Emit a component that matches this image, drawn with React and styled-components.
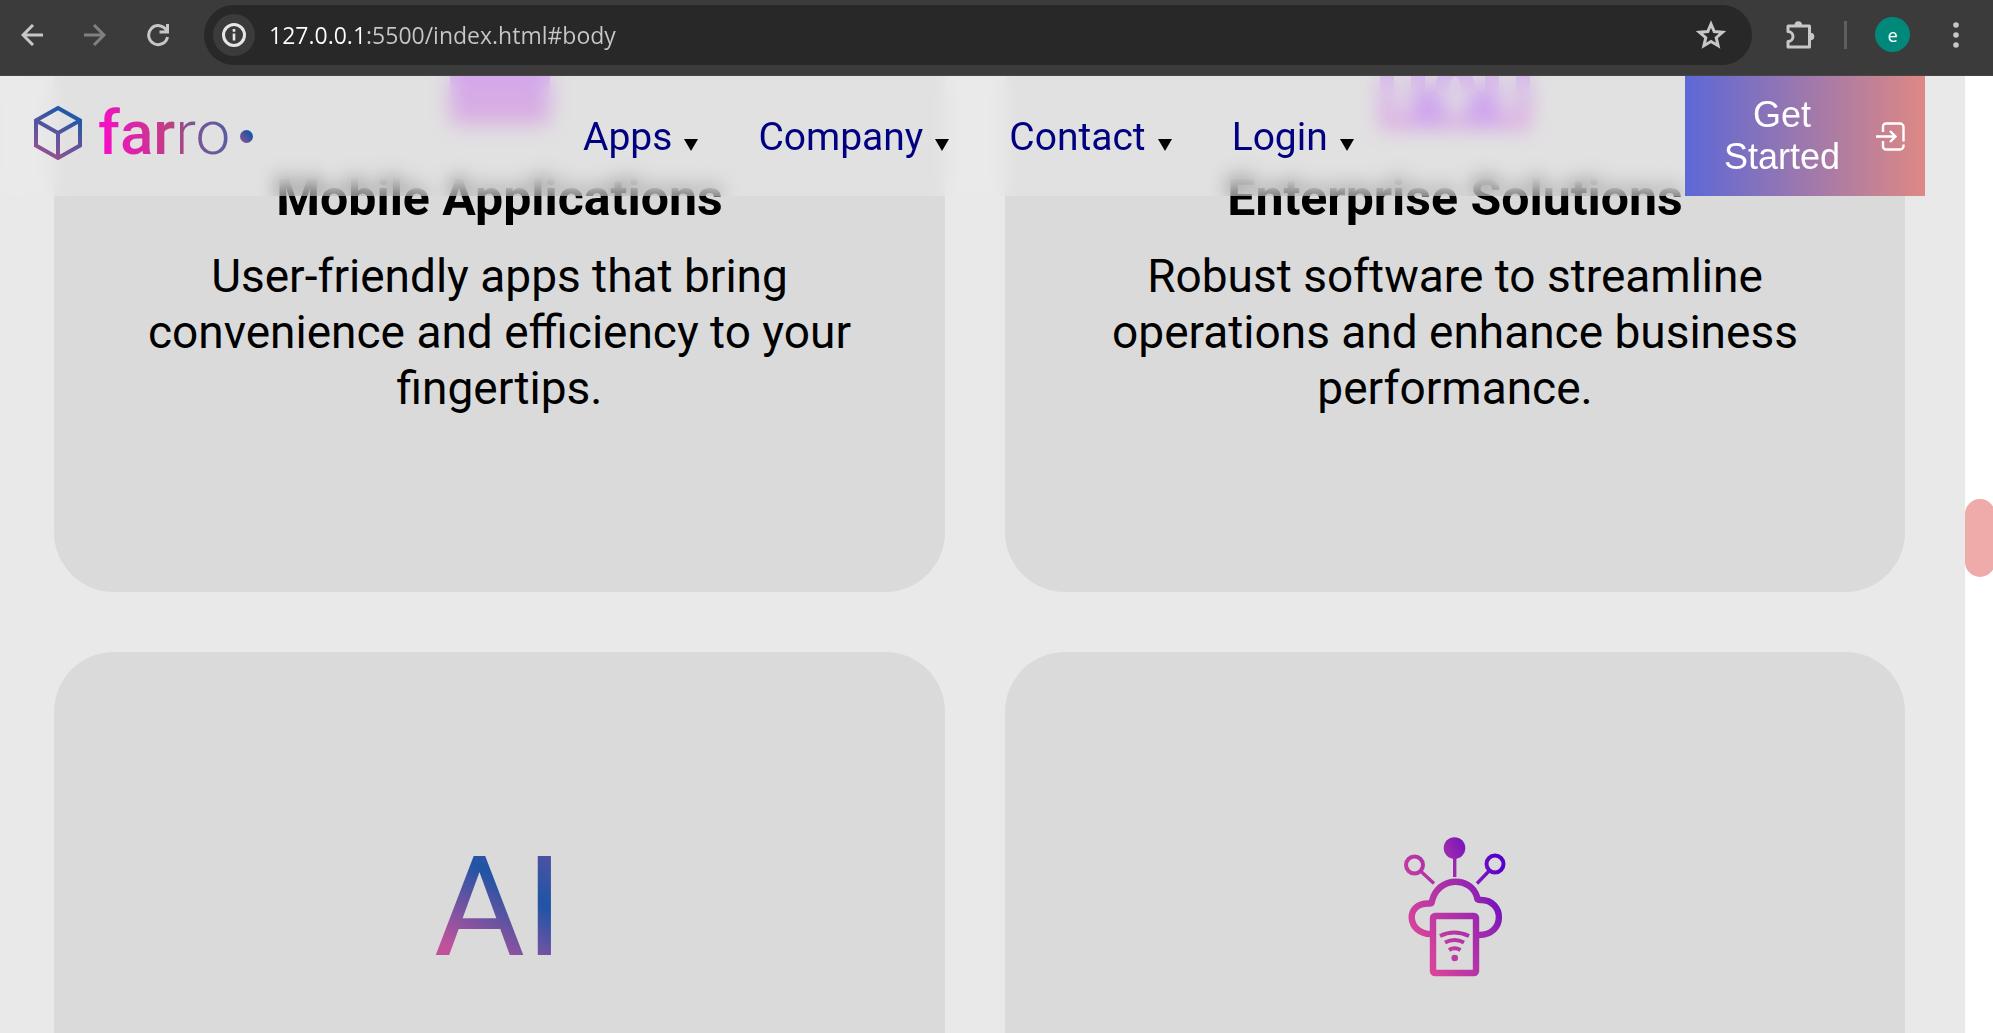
import React from "react";
import styled, { createGlobalStyle } from "styled-components";

const GlobalStyle = createGlobalStyle`
  *, *::before, *::after { box-sizing: border-box; }
  body { margin: 0; font-family: Roboto, "Liberation Sans", sans-serif; background: #fff; }
  h2, p { margin: 0; padding: 0; }
  button { border: 0; padding: 0; background: none; font: inherit; color: inherit; cursor: pointer; }
`;

const Window = styled.div`
  display: flex;
  flex-direction: column;
  height: 100vh;
  overflow: hidden;
`;

/* Browser toolbar */

const Toolbar = styled.div`
  display: flex;
  align-items: center;
  flex: none;
  height: 76px;
  padding: 0 13px 6px 8px;
  background: #3b3b3b;
  border-bottom: 1px solid #484446;
`;

const ToolGroup = styled.div`
  display: flex;
  align-items: center;
  gap: 15px;
`;

const ToolButton = styled.button`
  display: flex;
  align-items: center;
  justify-content: center;
  width: 48px;
  height: 48px;
  color: ${(p) => (p.$dim ? "#808080" : "#c7c7c7")};
`;

const AddressBar = styled.div`
  display: flex;
  align-items: center;
  flex: 1;
  height: 60px;
  margin: 0 24px 0 22px;
  padding: 0 17px 0 9px;
  border-radius: 30px;
  background: #282828;
`;

const SiteInfo = styled.button`
  display: flex;
  align-items: center;
  justify-content: center;
  width: 42px;
  height: 42px;
  border-radius: 50%;
  background: #3b3b3b;
  color: #e6e6e6;
`;

const AddressInput = styled.input`
  flex: 1;
  min-width: 0;
  height: 40px;
  margin-left: 14px;
  padding: 0;
  border: 0;
  outline: 0;
  font: 23px "Open Sans", "Noto Sans", sans-serif;
  color: transparent;
  background: linear-gradient(90deg, #fff 94px, #c7c7c7 94px);
  background-clip: text;
`;

const Separator = styled.span`
  width: 3px;
  height: 28px;
  margin: 0 28px 0 20px;
  background: #5f5f5f;
`;

const Avatar = styled.button`
  width: 35px;
  height: 35px;
  margin-right: 22px;
  border-radius: 50%;
  background: #00897b;
  color: #fff;
  font: 18px "Open Sans", sans-serif;
`;

/* Page */

const Viewport = styled.div`
  display: flex;
  flex: 1;
  min-height: 0;
`;

const Page = styled.main`
  position: relative;
  flex: 1;
  min-width: 0;
  overflow: hidden;
  background: #e9e9e9;
`;

const Header = styled.header`
  position: absolute;
  z-index: 1;
  top: 0;
  left: 0;
  right: 40px;
  display: flex;
  justify-content: space-between;
  height: 120px;
  padding-left: 33px;
  background: rgba(235, 235, 235, 0.4);
  backdrop-filter: blur(10px);
`;

const Logo = styled.a`
  display: flex;
  align-items: center;
  width: 550px;
  padding-bottom: 6px;
  text-decoration: none;
`;

const LogoText = styled.span`
  margin: 0 10px 0 15px;
  font-size: 62px;
  line-height: 76px;
  font-weight: 300;
  color: transparent;
  background: linear-gradient(75deg, #fb08d0 4%, #c04080 55%, #7a5595 70%, #4a60a8 100%);
  background-clip: text;

  b { font-weight: 500; }
`;

const LogoDot = styled.span`
  width: 13px;
  height: 13px;
  margin-top: 6px;
  border-radius: 50%;
  background: linear-gradient(45deg, #9a5090, #2355a5 70%);
`;

const Nav = styled.nav`
  display: flex;
  align-items: center;
  flex: 1;
  gap: 60px;
  padding-top: 2px;
`;

const NavLink = styled.a`
  display: flex;
  align-items: center;
  gap: 12px;
  font-size: 39px;
  line-height: 48px;
  color: navy;
  text-decoration: none;
`;

const Caret = styled.span`
  margin-top: 15px;
  border: 7px solid transparent;
  border-top: 12px solid #000;
  border-bottom: 0;
`;

const StartButton = styled.button`
  display: flex;
  align-items: center;
  justify-content: space-between;
  width: 240px;
  padding: 0 20px 0 38px;
  font: 36px/42px "Liberation Sans", Arial, sans-serif;
  color: #fff;
  background: linear-gradient(90deg, #5d68d6, #de8884);

  span { width: 118px; }
`;

const Cards = styled.section`
  display: grid;
  grid-template-columns: 99fr 100fr;
  grid-auto-rows: 800px;
  gap: 60px;
  margin-top: -284px;
  padding: 0 60px 0 54px;
`;

const Card = styled.article`
  display: flex;
  flex-direction: column;
  align-items: center;
  padding: 177px 60px 0;
  border-radius: 60px;
  background: #dadada;
  text-align: center;
`;

const CardIcon = styled.div`
  display: flex;
  align-items: center;
  justify-content: center;
  height: 156px;
  margin-bottom: 45px;
`;

const CardTitle = styled.h2`
  margin-bottom: 22px;
  font-size: 50px;
  line-height: 56px;
  font-weight: 700;
`;

const CardText = styled.p`
  font-size: 46px;
  line-height: 56px;
`;

const AiMark = styled.span`
  padding-right: 2px;
  font-size: 140px;
  line-height: 156px;
  color: transparent;
  background: linear-gradient(211deg, #6a52a0 0%, #2054a5 38%, #c0529c 80%);
  background-clip: text;
`;

const Scrollbar = styled.div`
  display: flex;
  flex-direction: column;
  flex: none;
  width: 28px;
  overflow: hidden;
  background: #fff;

  &::before { content: ""; flex: 423; }
  &::after { content: ""; flex: 456; }
`;

const Thumb = styled.div`
  flex: 78;
  width: 30px;
  border-radius: 15px;
  background: #efaaaa;
`;

const stroke = { fill: "none", stroke: "currentColor", strokeWidth: 3 };

const BackIcon = () => (
  <svg width="22" height="22" viewBox="0 0 22 22" {...stroke}><path d="M22 11H2M12 1L2 11l10 10" /></svg>
);
const ForwardIcon = () => (
  <svg width="22" height="22" viewBox="0 0 22 22" {...stroke}><path d="M0 11h20M10 1l10 10-10 10" /></svg>
);
const ReloadIcon = () => (
  <svg width="24" height="24" viewBox="0 0 24 24" {...stroke}>
    <path d="M20.500 7.500A9.500 9.500 0 1 0 21.500 14" /><path d="M21.500 1v8h-8" />
  </svg>
);
const InfoIcon = () => (
  <svg width="24" height="24" viewBox="0 0 24 24" {...stroke}>
    <circle cx="12" cy="12" r="10.500" /><path d="M12 10.500v7M12 6v2.800" strokeWidth="2.600" />
  </svg>
);
const StarIcon = () => (
  <svg width="30" height="30" viewBox="0 0 30 30" {...stroke}>
    <path d="M15 4l3.200 7.600 8.200.7-6.200 5.400 1.900 8-7.100-4.300-7.100 4.300 1.900-8-6.200-5.400 8.200-.7z" />
  </svg>
);
const ExtensionIcon = () => (
  <svg width="30" height="30" viewBox="0 0 30 30" {...stroke}>
    <path d="M3 6h21.500v21H3v-5.500a5 5 0 0 0 0-10z" strokeLinejoin="round" />
    <path d="M9.500 5a3.800 3.800 0 0 1 7.600 0zM25.500 12.700a3.800 3.800 0 0 1 0 7.600z" fill="currentColor" stroke="none" />
  </svg>
);
const MenuIcon = () => (
  <svg width="6" height="26" viewBox="0 0 6 26" fill="currentColor">
    <circle cx="3" cy="3" r="2.800" /><circle cx="3" cy="13" r="2.800" /><circle cx="3" cy="23" r="2.800" />
  </svg>
);

const CubeIcon = () => (
  <svg width="50" height="56" viewBox="0 0 50 56" fill="none" stroke="url(#cube)" strokeWidth="4">
    <defs>
      <linearGradient id="cube" x1="35" y1="10" x2="15" y2="52" gradientUnits="userSpaceOnUse">
        <stop offset="0" stopColor="#2358a8" /><stop offset="1" stopColor="#965090" />
      </linearGradient>
    </defs>
    <path d="M25 3l22 12.500v25L25 53 3 40.500v-25z" />
    <path d="M3 15.500L25 28l22-12.500M25 28v25" />
  </svg>
);

const EnterIcon = () => (
  <svg width="29" height="29" viewBox="0 0 29 29" fill="none" stroke="#fff" strokeWidth="2.400">
    <path d="M7 10V4.500A3 3 0 0 1 10 1.500h14A3.500 3.500 0 0 1 27.500 5v14.500M27.500 22.500V24a3.500 3.500 0 0 1-3.500 3.500H10a3 3 0 0 1-3-3V19" />
    <path d="M0 14.500h19M14 9l5.500 5.500L14 20" />
  </svg>
);

const PhoneIcon = () => (
  <svg width="100" height="156" viewBox="0 0 100 156">
    <defs>
      <linearGradient id="phone" x1="0" y1="1" x2="0" y2="0">
        <stop offset="0" stopColor="#d08ad8" /><stop offset="0.400" stopColor="#bf76f2" />
      </linearGradient>
    </defs>
    <path fill="url(#phone)" d="M8 0h84a8 8 0 0 1 8 8v140a8 8 0 0 1-8 8H8a8 8 0 0 1-8-8V8a8 8 0 0 1 8-8z" />
  </svg>
);

const EnterpriseIcon = () => (
  <svg width="150" height="166" viewBox="0 0 150 166" fill="none" stroke="url(#enterprise)" strokeWidth="14">
    <defs>
      <linearGradient id="enterprise" x1="0" y1="160" x2="0" y2="60" gradientUnits="userSpaceOnUse">
        <stop offset="0" stopColor="#d67ade" /><stop offset="0.500" stopColor="#c08af0" />
      </linearGradient>
    </defs>
    <path d="M7 60v98h136V60M38 100v50M112 100v50M62 128c0-30 26-30 26 0" />
    <path d="M32 132l22-6 12 12v24H32zM120 132l-22-6-12 12v24h34z" fill="#bb74f2" stroke="none" />
  </svg>
);

const CloudIcon = () => (
  <svg width="102" height="140" viewBox="0 0 102 140" fill="none" stroke="url(#cloud)">
    <defs>
      <linearGradient id="cloud" x1="30" y1="136" x2="125" y2="87" gradientUnits="userSpaceOnUse">
        <stop offset="0" stopColor="#d8449a" /><stop offset="0.650" stopColor="#9827b0" /><stop offset="1" stopColor="#5700cc" />
      </linearGradient>
    </defs>
    <circle cx="50.500" cy="11" r="10.800" fill="url(#cloud)" stroke="none" />
    <circle cx="10.500" cy="28" r="8.500" strokeWidth="4" />
    <circle cx="91" cy="27" r="8.500" strokeWidth="4" />
    <path d="M50.700 18v22M17 34.500l13 12M85 34L73 46.500" strokeWidth="3.400" />
    <path d="M27 97C3 97 0 65 26 66.500Q28 66.500 28 64C34 39 67 39 73 60Q73 63 76 63C101 62 102 99 74 98" strokeWidth="6.400" strokeLinejoin="round" />
    <rect x="29" y="79" width="43" height="57" rx="2" strokeWidth="6.400" />
    <path d="M36 99q14-7 29 0M41 105.500q9.500-5 19 0M45 113q5.500-3.500 11.500 0" strokeWidth="4" />
    <circle cx="50.700" cy="121" r="3.300" fill="url(#cloud)" stroke="none" />
  </svg>
);

const links = ["Apps", "Company", "Contact", "Login"];

const cards = [
  {
    icon: <PhoneIcon />,
    title: "Mobile Applications",
    text: "User-friendly apps that bring convenience and efficiency to your fingertips.",
  },
  {
    icon: <EnterpriseIcon />,
    title: "Enterprise Solutions",
    text: "Robust software to streamline operations and enhance business performance.",
  },
  { icon: <AiMark>AI</AiMark> },
  { icon: <CloudIcon /> },
];

export default function App() {
  return (
    <Window>
      <GlobalStyle />
      <Toolbar>
        <ToolGroup>
          <ToolButton aria-label="Back"><BackIcon /></ToolButton>
          <ToolButton aria-label="Forward" $dim><ForwardIcon /></ToolButton>
          <ToolButton aria-label="Reload"><ReloadIcon /></ToolButton>
        </ToolGroup>
        <AddressBar>
          <SiteInfo aria-label="Site information"><InfoIcon /></SiteInfo>
          <AddressInput aria-label="Address" defaultValue="127.0.0.1:5500/index.html#body" />
          <ToolButton aria-label="Bookmark"><StarIcon /></ToolButton>
        </AddressBar>
        <ToolButton aria-label="Extensions"><ExtensionIcon /></ToolButton>
        <Separator />
        <Avatar aria-label="Profile">e</Avatar>
        <ToolButton aria-label="Menu"><MenuIcon /></ToolButton>
      </Toolbar>
      <Viewport>
        <Page>
          <Header>
            <Logo href="#body">
              <CubeIcon />
              <LogoText><b>far</b>ro</LogoText>
              <LogoDot />
            </Logo>
            <Nav>
              {links.map((label) => (
                <NavLink key={label} href="#body">{label}<Caret /></NavLink>
              ))}
            </Nav>
            <StartButton><span>Get Started</span><EnterIcon /></StartButton>
          </Header>
          <Cards>
            {cards.map((card, i) => (
              <Card key={i}>
                <CardIcon>{card.icon}</CardIcon>
                {card.title && <CardTitle>{card.title}</CardTitle>}
                {card.text && <CardText>{card.text}</CardText>}
              </Card>
            ))}
          </Cards>
        </Page>
        <Scrollbar><Thumb /></Scrollbar>
      </Viewport>
    </Window>
  );
}
